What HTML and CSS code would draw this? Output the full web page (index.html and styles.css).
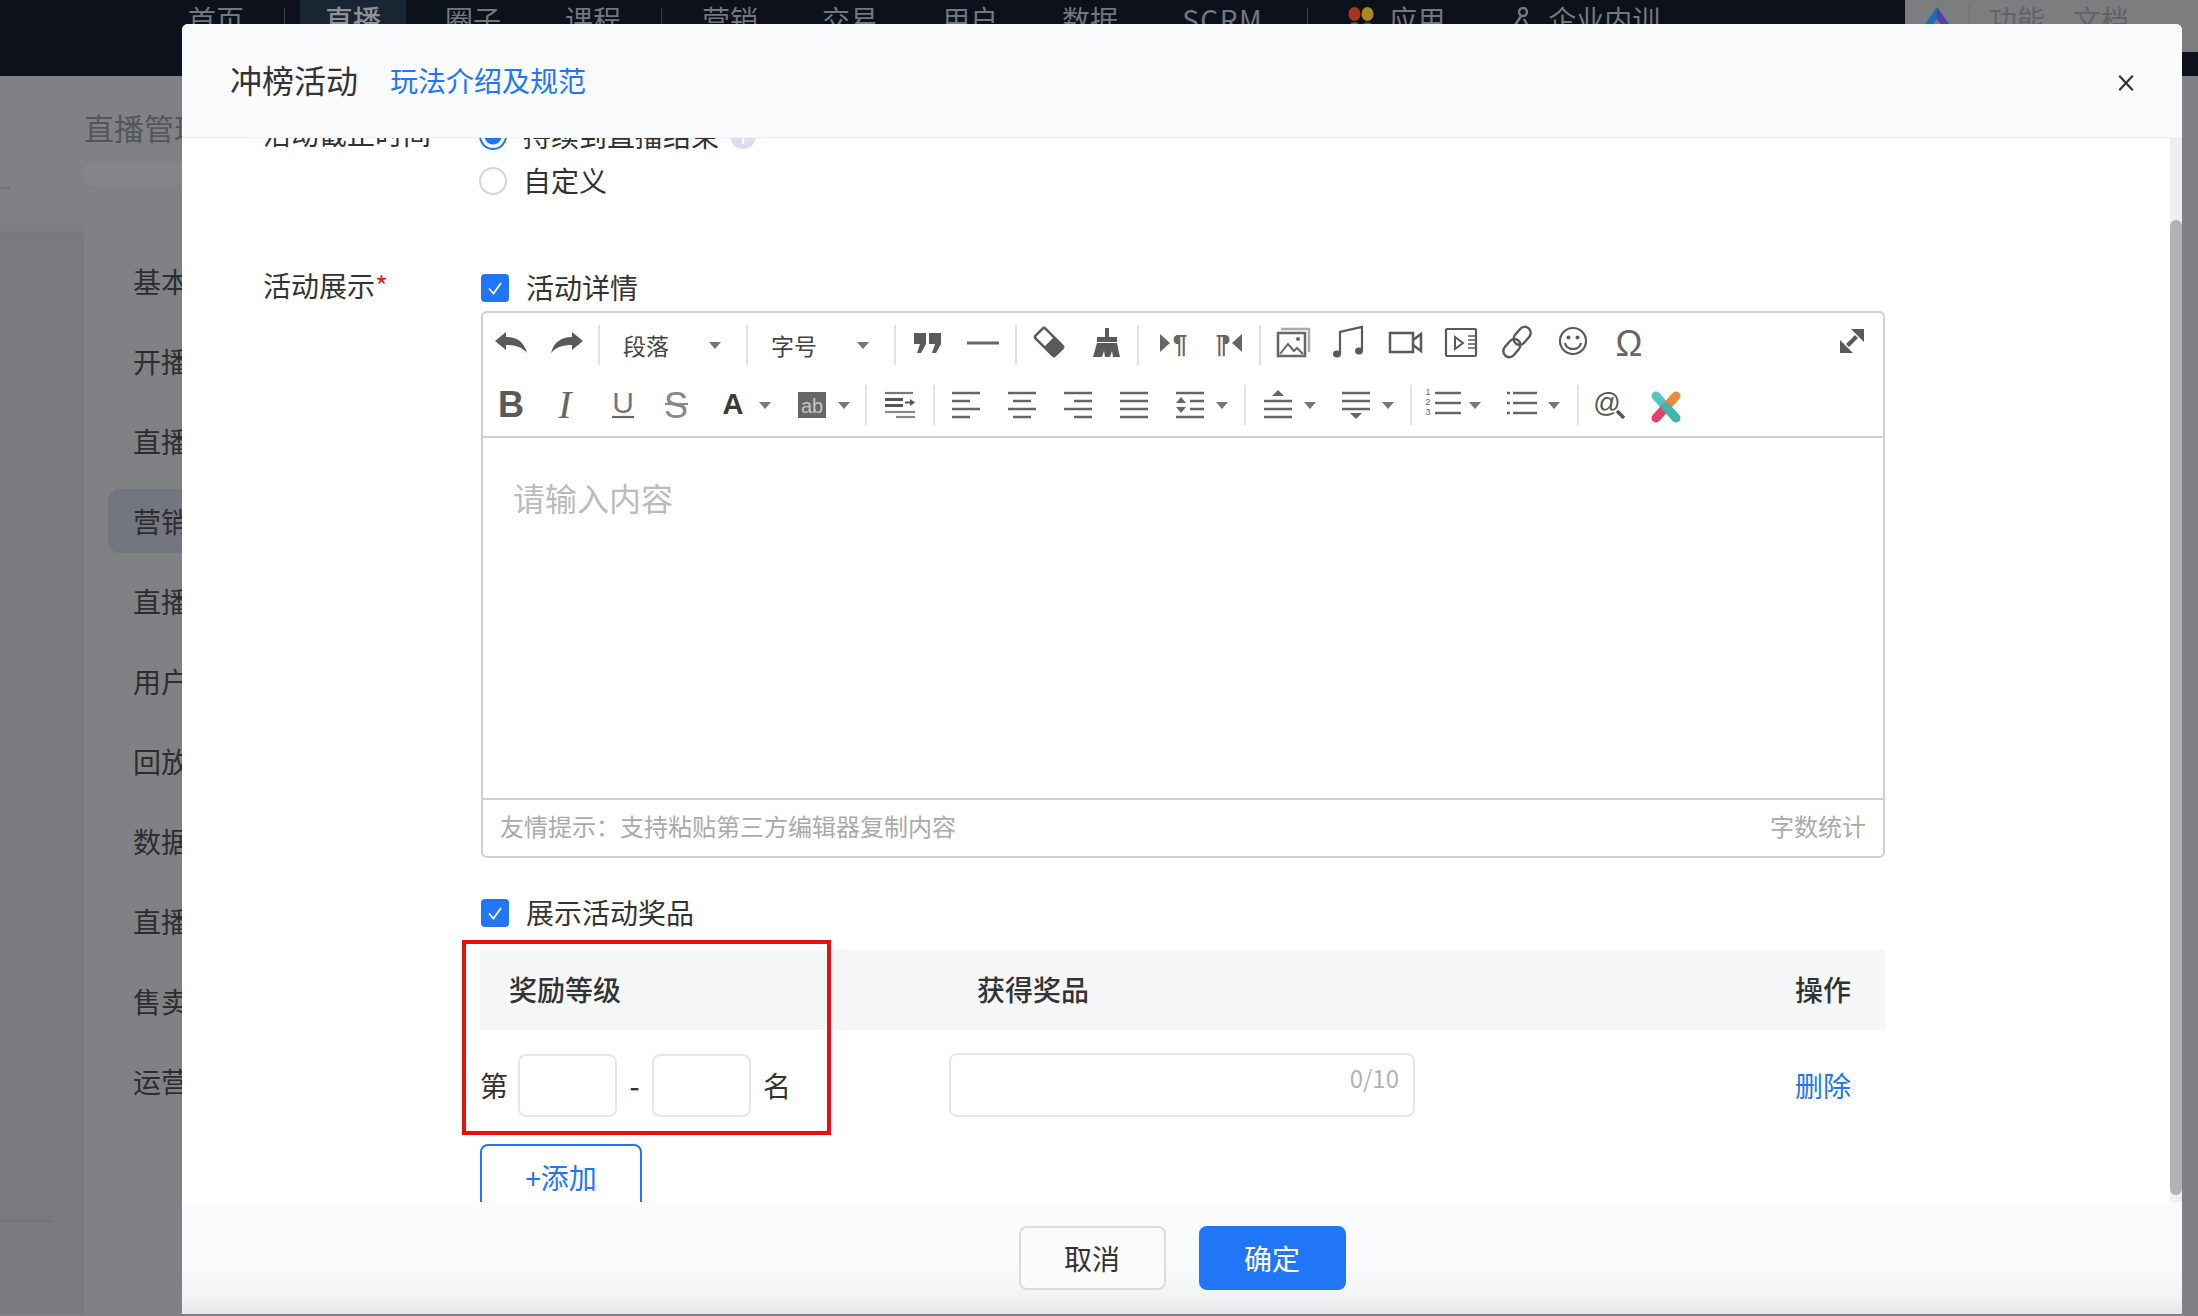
FILE: index.html
```html
<!DOCTYPE html>
<html lang="zh-CN">
<head>
    <meta charset="UTF-8">
    <meta name="viewport" content="width=device-width, initial-scale=1.0">
    <title>冲榜活动</title>
    <link rel="stylesheet" href="styles.css">
</head>
<body>
    <!-- page behind the dialog -->
    <div class="topbar">
        <div class="nav-item">首页</div>
        <div class="nav-sep"></div>
        <div class="nav-item nav-active">直播</div>
        <div class="nav-item">圈子</div>
        <div class="nav-item">课程</div>
        <div class="nav-sep"></div>
        <div class="nav-item">营销</div>
        <div class="nav-item">交易</div>
        <div class="nav-item">用户</div>
        <div class="nav-item">数据</div>
        <div class="nav-item nav-scrm">SCRM</div>
        <div class="nav-sep"></div>
        <div class="nav-item nav-icon-item">
            <svg class="nav-apps" viewBox="0 0 26 34">
                <ellipse cx="6.5" cy="7" rx="6" ry="7" fill="#a8361d"/>
                <ellipse cx="19.5" cy="7" rx="6" ry="7" fill="#a98a1f"/>
                <ellipse cx="6.5" cy="21" rx="6" ry="6" fill="#2c7d3e"/>
                <ellipse cx="19.5" cy="21" rx="6" ry="6" fill="#1e4f9c"/>
            </svg>
            <span>应用</span>
        </div>
        <div class="nav-item nav-icon-item">
            <svg class="nav-train" viewBox="0 0 24 34">
                <circle cx="14" cy="6" r="4" fill="none" stroke="#74777c" stroke-width="2.5"/>
                <path d="M12 10 3 24h18l-6-11M5 24l-3 8h20l-3-8" fill="none" stroke="#74777c" stroke-width="2.5"/>
            </svg>
            <span>企业内训</span>
        </div>
        <div class="nav-right">
            <svg class="nav-logo" viewBox="0 0 48 34">
                <path d="M24 0 0 34h9l15-22z" fill="#1a6fb0"/>
                <path d="M24 0l24 34h-9L24 12z" fill="#5a3ea8"/>
            </svg>
            <div class="nav-right-sep"></div>
            <span class="nav-right-link">功能</span>
            <span class="nav-right-link">文档</span>
        </div>
    </div>

    <div class="page">
        <div class="rail">
            <div class="rail-line rail-line-short"></div>
            <div class="rail-line rail-line-long"></div>
        </div>
        <div class="page-main">
            <div class="crumb">直播管理</div>
            <div class="crumb-panel"></div>
            <div class="side-panel">
                <div class="side-item">基本信息</div>
                <div class="side-item">开播提醒</div>
                <div class="side-item">直播设置</div>
                <div class="side-item side-active">营销工具</div>
                <div class="side-item">直播互动</div>
                <div class="side-item">用户管理</div>
                <div class="side-item">回放设置</div>
                <div class="side-item">数据统计</div>
                <div class="side-item">直播带货</div>
                <div class="side-item">售卖设置</div>
                <div class="side-item">运营工具</div>
            </div>
        </div>
    </div>

    <!-- dialog -->
    <div class="modal">
        <div class="modal-header">
            <div class="modal-title">冲榜活动</div>
            <a class="modal-link">玩法介绍及规范</a>
            <svg class="modal-close" viewBox="0 0 16 16">
                <path d="M2 1.500l12 13M14 1.500 2 14.500" stroke="#333" stroke-width="1.9"/>
            </svg>
        </div>

        <div class="modal-body">
            <div class="form">
                <div class="form-row form-row-first">
                    <div class="form-label">活动截止时间</div>
                    <div class="radio-group">
                        <div class="radio-row">
                            <span class="radio radio-on"></span>
                            <span class="row-text">持续到直播结束</span>
                            <span class="info-dot">i</span>
                        </div>
                        <div class="radio-row">
                            <span class="radio"></span>
                            <span class="row-text">自定义</span>
                        </div>
                    </div>
                </div>

                <div class="form-row form-row-show">
                    <div class="form-label">活动展示<span class="required">*</span></div>
                    <div class="form-content">
                        <div class="check-row">
                            <span class="checkbox">
                                <svg viewBox="0 0 28 28"><path d="M8 14.5l4.5 5L20 9" fill="none" stroke="#fff" stroke-width="1.8"/></svg>
                            </span>
                            <span class="row-text">活动详情</span>
                        </div>

                        <div class="editor">
                            <div class="toolbar">
                                <div class="tb-row">
                                    <span class="tb-btn">
                                        <svg viewBox="0 0 40 40"><path d="M4 16 15 7v5c11 0 18 5 21 16-5-6-12-8-21-8v5z" fill="#5a5a5a"/></svg>
                                    </span>
                                    <span class="tb-btn">
                                        <svg viewBox="0 0 40 40"><path d="M36 16 25 7v5C14 12 7 17 4 28c5-6 12-8 21-8v5z" fill="#5a5a5a"/></svg>
                                    </span>
                                    <span class="tb-sep"></span>
                                    <span class="tb-drop">段落<i class="caret"></i></span>
                                    <span class="tb-sep"></span>
                                    <span class="tb-drop">字号<i class="caret"></i></span>
                                    <span class="tb-sep"></span>
                                    <span class="tb-btn">
                                        <svg viewBox="0 0 40 40"><path d="M7 8h12v11l-5 9h-4l3-9H7zM22 8h12v11l-5 9h-4l3-9h-6z" fill="#5a5a5a"/></svg>
                                    </span>
                                    <span class="tb-btn">
                                        <svg viewBox="0 0 40 40"><path d="M4 18h32" stroke="#666" stroke-width="3"/></svg>
                                    </span>
                                    <span class="tb-sep tb-sep-wide"></span>
                                    <span class="tb-btn">
                                        <svg viewBox="0 0 40 40">
                                            <g transform="rotate(45 20 17)">
                                                <rect x="6" y="10" width="28" height="14" rx="2" fill="#fff" stroke="#5a5a5a" stroke-width="2.5"/>
                                                <rect x="20" y="10" width="14" height="14" fill="#5a5a5a"/>
                                            </g>
                                        </svg>
                                    </span>
                                    <span class="tb-btn">
                                        <svg viewBox="0 0 40 40">
                                            <path d="M20 3h4v9h-4zM12 12h20v5H12zM12 18h20l3 14h-7l-1-6-2 6h-5l-1-6-2 6H8z" fill="#5a5a5a"/>
                                        </svg>
                                    </span>
                                    <span class="tb-sep tb-sep-wide"></span>
                                    <span class="tb-btn">
                                        <svg viewBox="0 0 40 40">
                                            <path d="M9 9l10 9-10 9z" fill="#666"/>
                                            <text class="tb-pilcrow" x="29" y="28" text-anchor="middle">¶</text>
                                        </svg>
                                    </span>
                                    <span class="tb-btn">
                                        <svg viewBox="0 0 40 40">
                                            <path d="M35 9l-10 9 10 9z" fill="#666"/>
                                            <text class="tb-pilcrow" transform="matrix(-1 0 0 1 30 0)" x="14" y="28" text-anchor="middle">¶</text>
                                        </svg>
                                    </span>
                                    <span class="tb-sep tb-sep-wide"></span>
                                    <span class="tb-btn">
                                        <svg viewBox="0 0 40 40">
                                            <path d="M8 4h28v23" fill="none" stroke="#aaa" stroke-width="2.5"/>
                                            <rect x="5" y="8" width="27" height="23" fill="#fff" stroke="#666" stroke-width="2.5"/>
                                            <path d="M7 29l8-10 6 7 3-3 6 6" fill="none" stroke="#666" stroke-width="2"/>
                                            <circle cx="25" cy="14" r="2" fill="#666"/>
                                        </svg>
                                    </span>
                                    <span class="tb-btn">
                                        <svg viewBox="0 0 40 40">
                                            <path d="M11 28V7l22-5v23" fill="none" stroke="#5a5a5a" stroke-width="2.2"/>
                                            <ellipse cx="8" cy="29" rx="4" ry="3.4" fill="#5a5a5a"/>
                                            <ellipse cx="30" cy="26" rx="4" ry="3.4" fill="#5a5a5a"/>
                                        </svg>
                                    </span>
                                    <span class="tb-btn">
                                        <svg viewBox="0 0 40 40">
                                            <rect x="5" y="8" width="23" height="19" fill="none" stroke="#5a5a5a" stroke-width="2.5"/>
                                            <path d="M28 15l8-6v17l-8-6" fill="none" stroke="#5a5a5a" stroke-width="2.5"/>
                                        </svg>
                                    </span>
                                    <span class="tb-btn">
                                        <svg viewBox="0 0 40 40">
                                            <rect x="5" y="4" width="30" height="27" rx="1" fill="none" stroke="#5a5a5a" stroke-width="2.2"/>
                                            <path d="M14 12l8 6-8 6z" fill="none" stroke="#5a5a5a" stroke-width="2"/>
                                            <path d="M27 11h8M27 15h8M27 19h8M27 23h8" stroke="#5a5a5a" stroke-width="1.6"/>
                                        </svg>
                                    </span>
                                    <span class="tb-btn">
                                        <svg viewBox="0 0 40 40">
                                            <g fill="none" stroke="#5a5a5a" stroke-width="2.4" transform="rotate(-50 20 17)">
                                                <rect x="2" y="11" width="20" height="12" rx="6"/>
                                                <rect x="18" y="11" width="20" height="12" rx="6"/>
                                            </g>
                                        </svg>
                                    </span>
                                    <span class="tb-btn">
                                        <svg viewBox="0 0 40 40">
                                            <circle cx="20" cy="16" r="13" fill="none" stroke="#5a5a5a" stroke-width="2.2"/>
                                            <circle cx="15.5" cy="12.5" r="2" fill="#5a5a5a"/>
                                            <circle cx="24.5" cy="12.5" r="2" fill="#5a5a5a"/>
                                            <path d="M12 18c2 8 14 8 16 0" fill="none" stroke="#5a5a5a" stroke-width="2.2"/>
                                        </svg>
                                    </span>
                                    <span class="tb-btn">
                                        <svg viewBox="0 0 40 40"><text class="tb-omega" x="20" y="31" text-anchor="middle">Ω</text></svg>
                                    </span>
                                    <span class="tb-full">
                                        <svg viewBox="0 0 24 24">
                                            <path d="M11 0h13v13zM0 24V11l13 13zM6 15 15 6l3 3-9 9z" fill="#5a5a5a"/>
                                        </svg>
                                    </span>
                                </div>

                                <div class="tb-row">
                                    <span class="tb-btn">
                                        <svg viewBox="0 0 40 40"><text class="tb-b" x="20" y="32" text-anchor="middle">B</text></svg>
                                    </span>
                                    <span class="tb-btn">
                                        <svg viewBox="0 0 40 40"><text class="tb-i" x="18" y="33" text-anchor="middle">I</text></svg>
                                    </span>
                                    <span class="tb-btn">
                                        <svg viewBox="0 0 40 40">
                                            <text class="tb-u" x="20" y="28" text-anchor="middle">U</text>
                                            <path d="M9 32h22" stroke="#666" stroke-width="2.2"/>
                                        </svg>
                                    </span>
                                    <span class="tb-btn">
                                        <svg viewBox="0 0 40 40">
                                            <text class="tb-s" x="17" y="33" text-anchor="middle">S</text>
                                            <path d="M6 19h23" stroke="#888" stroke-width="2.2"/>
                                        </svg>
                                    </span>
                                    <span class="tb-split">
                                        <svg viewBox="0 0 40 40"><text class="tb-a" x="20" y="29" text-anchor="middle">A</text></svg>
                                        <i class="caret caret-sm"></i>
                                    </span>
                                    <span class="tb-split split-ab">
                                        <svg viewBox="0 0 40 40">
                                            <rect x="6" y="7" width="28" height="26" fill="#666"/>
                                            <text class="tb-ab" x="20" y="28" text-anchor="middle">ab</text>
                                        </svg>
                                        <i class="caret caret-sm"></i>
                                    </span>
                                    <span class="tb-sep"></span>
                                    <span class="tb-btn tb-btn-indent">
                                        <svg viewBox="0 0 40 40">
                                            <path d="M5 8h28" stroke="#777" stroke-width="2.2"/>
                                            <path d="M5 14.500h18M5 20.500h18" stroke="#555" stroke-width="3"/>
                                            <path d="M25 17.500h6" stroke="#555" stroke-width="2"/>
                                            <path d="M30 14l5 3.500-5 3.500z" fill="#555"/>
                                            <path d="M5 27h30" stroke="#888" stroke-width="2.2"/>
                                            <path d="M16 32h19" stroke="#888" stroke-width="2.2"/>
                                        </svg>
                                    </span>
                                    <span class="tb-sep"></span>
                                    <span class="tb-btn">
                                        <svg viewBox="0 0 40 40"><path d="M6 8h28M6 16h18M6 24h28M6 32h18" stroke="#666" stroke-width="2.400"/></svg>
                                    </span>
                                    <span class="tb-btn">
                                        <svg viewBox="0 0 40 40"><path d="M6 8h28M11 16h18M6 24h28M11 32h18" stroke="#666" stroke-width="2.400"/></svg>
                                    </span>
                                    <span class="tb-btn">
                                        <svg viewBox="0 0 40 40"><path d="M6 8h28M16 16h18M6 24h28M16 32h18" stroke="#666" stroke-width="2.400"/></svg>
                                    </span>
                                    <span class="tb-btn">
                                        <svg viewBox="0 0 40 40"><path d="M6 8h28M6 16h28M6 24h28M6 32h28" stroke="#666" stroke-width="2.400"/></svg>
                                    </span>
                                    <span class="tb-split split-lh">
                                        <svg viewBox="0 0 40 40">
                                            <path d="M6 8h28M20 16h14M20 24h14M6 32h28" stroke="#666" stroke-width="2.400"/>
                                            <path d="M11 12l5 6H6zM11 28l5-6H6z" fill="#666"/>
                                        </svg>
                                        <i class="caret caret-sm"></i>
                                    </span>
                                    <span class="tb-sep"></span>
                                    <span class="tb-split split-top">
                                        <svg viewBox="0 0 40 40">
                                            <path d="M14 11l6-6 6 6z" fill="#666"/>
                                            <path d="M6 16h28M6 24h28M6 32h28" stroke="#666" stroke-width="2.400"/>
                                        </svg>
                                        <i class="caret caret-sm"></i>
                                    </span>
                                    <span class="tb-split split-bottom">
                                        <svg viewBox="0 0 40 40">
                                            <path d="M6 8h28M6 16h28M6 24h28" stroke="#666" stroke-width="2.400"/>
                                            <path d="M14 28l6 6 6-6z" fill="#666"/>
                                        </svg>
                                        <i class="caret caret-sm"></i>
                                    </span>
                                    <span class="tb-sep"></span>
                                    <span class="tb-split split-ol">
                                        <svg viewBox="0 0 40 40">
                                            <text class="tb-num" x="5" y="10" text-anchor="middle">1</text>
                                            <text class="tb-num" x="5" y="20" text-anchor="middle">2</text>
                                            <text class="tb-num" x="5" y="30" text-anchor="middle">3</text>
                                            <path d="M12 8h26M12 18h26M12 28h26" stroke="#666" stroke-width="2.400"/>
                                        </svg>
                                        <i class="caret caret-sm"></i>
                                    </span>
                                    <span class="tb-split split-ul">
                                        <svg viewBox="0 0 40 40">
                                            <path d="M5 8h3M5 18h3M5 28h3" stroke="#666" stroke-width="2.400"/>
                                            <path d="M11 8h24M11 18h24M11 28h24" stroke="#666" stroke-width="2.400"/>
                                        </svg>
                                        <i class="caret caret-sm"></i>
                                    </span>
                                    <span class="tb-sep"></span>
                                    <span class="tb-btn">
                                        <svg viewBox="0 0 40 40">
                                            <text class="tb-at" x="17" y="27" text-anchor="middle">@</text>
                                            <path d="M27 26l7 7" stroke="#555" stroke-width="3.500"/>
                                        </svg>
                                    </span>
                                    <span class="tb-btn">
                                        <svg viewBox="0 0 40 40">
                                            <g fill="none" stroke-width="9" stroke-linecap="round">
                                                <path d="M10 11l10 11" stroke="#54c6bf"/>
                                                <path d="M30 11 20 22" stroke="#ee8a3c"/>
                                                <path d="M10 33l10-11" stroke="#e6406f"/>
                                                <path d="M30 33 20 22" stroke="#3fb6a6"/>
                                            </g>
                                        </svg>
                                    </span>
                                </div>
                            </div>

                            <div class="editor-area">请输入内容</div>

                            <div class="editor-foot">
                                <span>友情提示：支持粘贴第三方编辑器复制内容</span>
                                <span>字数统计</span>
                            </div>
                        </div>

                        <div class="check-row check-row-prize">
                            <span class="checkbox">
                                <svg viewBox="0 0 28 28"><path d="M8 14.5l4.5 5L20 9" fill="none" stroke="#fff" stroke-width="1.8"/></svg>
                            </span>
                            <span class="row-text">展示活动奖品</span>
                        </div>
                    </div>
                </div>

                <div class="prize-table">
                    <div class="prize-head">
                        <div class="head-level">奖励等级</div>
                        <div class="head-prize">获得奖品</div>
                        <div class="head-action">操作</div>
                    </div>
                    <div class="prize-row">
                        <div class="level-cell">
                            <span>第</span>
                            <span class="rank-input"></span>
                            <span class="rank-dash">-</span>
                            <span class="rank-input"></span>
                            <span class="rank-end">名</span>
                        </div>
                        <div class="prize-input">0/10</div>
                        <a class="row-delete">删除</a>
                    </div>
                    <button class="add-btn">+添加</button>
                </div>
            </div>

            <div class="scrollbar"><div class="scroll-thumb"></div></div>
            <div class="red-box"></div>
        </div>

        <div class="modal-footer">
            <button class="btn btn-cancel">取消</button>
            <button class="btn btn-primary">确定</button>
        </div>
    </div>
</body>
</html>
```

FILE: styles.css
```css
* {
    box-sizing: border-box;
}
html, body {
    margin: 0;
    height: 100%;
}
body {
    width: 2198px;
    height: 1316px;
    overflow: hidden;
    position: relative;
    background-color: #808184;
    font-family: "Noto Sans CJK SC", "Liberation Sans", sans-serif;
    font-size: 28px;
    color: #333;
}

/* top bar, dimmed by the dialog mask */
.topbar {
    display: flex;
    align-items: flex-start;
    gap: 14px;
    height: 76px;
    padding-left: 163px;
    background-color: #0c111b;
    color: #74777c;
}
.nav-item {
    height: 76px;
    padding: 0 25px;
    line-height: 38px;
    white-space: nowrap;
}
.nav-active {
    background-color: #1a2534;
    color: #8e9196;
    font-weight: 500;
}
.nav-scrm {
    padding-right: 29px;
    letter-spacing: 1.5px;
}
.nav-icon-item {
    display: flex;
    gap: 15px;
}
.nav-apps {
    width: 26px;
    height: 34px;
    margin-top: 7px;
}
.nav-train {
    width: 24px;
    height: 34px;
    margin-top: 6px;
}
.nav-sep {
    width: 1px;
    height: 24px;
    margin: 8px 1px 0;
    background-color: #3a3e45;
}
.nav-right {
    display: flex;
    align-items: flex-start;
    width: 293px;
    height: 52px;
    margin-left: auto;
    padding-left: 8px;
    background-color: #7c7d7f;
    color: #626366;
    line-height: 38px;
}
.nav-logo {
    width: 48px;
    height: 34px;
    margin-top: 7px;
}
.nav-right-sep {
    width: 1px;
    height: 40px;
    margin: 4px 19px 0 8px;
    background-color: #6f7072;
}
.nav-right-link {
    margin-right: 28px;
}

/* page under the mask */
.page {
    display: flex;
    height: 1238px;
}
.rail {
    width: 84px;
    background: linear-gradient(#808184 0, #808184 142px, #797a7d 160px);
}
.rail-line {
    height: 2px;
    background-color: #717275;
}
.rail-line-short {
    width: 10px;
    margin-top: 111px;
}
.rail-line-long {
    width: 52px;
    margin-top: 1031px;
}
.page-main {
    flex: 1;
}
.crumb {
    height: 87px;
    padding-top: 30px;
    font-size: 30px;
    line-height: 42px;
    color: #55565a;
}
.crumb-panel {
    width: 400px;
    height: 22px;
    border-radius: 8px 0 0 8px;
    background-color: #858689;
}
.side-panel {
    display: flex;
    flex-direction: column;
    gap: 16px;
    width: 400px;
    height: 1065px;
    margin-top: 33px;
    padding: 31px 0 0 24px;
    background-color: #808184;
}
.side-item {
    height: 64px;
    padding-left: 25px;
    border-radius: 12px 0 0 12px;
    line-height: 64px;
    color: #2d2d2e;
    white-space: nowrap;
}
.side-active {
    background-color: #73767f;
}

/* dialog */
.modal {
    position: absolute;
    left: 182px;
    top: 24px;
    display: flex;
    flex-direction: column;
    width: 2000px;
    height: 1290px;
    border-radius: 6px 6px 0 0;
    overflow: hidden;
    background-color: #fff;
}
.modal-header {
    display: flex;
    align-items: center;
    flex-shrink: 0;
    height: 114px;
    padding: 0 47px 1px 48px;
    border-bottom: 1px solid #f0f0f1;
    background-color: #fafbfd;
}
.modal-title {
    margin-bottom: 3px;
    font-size: 32px;
    color: #333;
}
.modal-link {
    margin-left: 32px;
    font-size: 28px;
    color: #2176f7;
}
.modal-close {
    width: 18px;
    height: 18px;
    margin-top: 5px;
    margin-left: auto;
}
.modal-body {
    position: relative;
    display: flex;
    flex: 1;
    overflow: hidden;
}
.form {
    flex: 1;
    padding-left: 81px;
}
.form-row {
    display: flex;
}
.form-row-first {
    margin-top: -23px;
}
.form-row-show {
    margin-top: 65px;
}
.form-label {
    width: 218px;
    flex-shrink: 0;
    line-height: 37px;
    white-space: nowrap;
}
.required {
    color: #e5212b;
}
.radio-group {
    display: flex;
    flex-direction: column;
    gap: 3px;
    margin-left: -2px;
}
.radio-row {
    display: flex;
    align-items: center;
    gap: 16px;
    height: 42px;
}
.row-text {
    margin-bottom: 3px;
}
.radio {
    width: 28px;
    height: 28px;
    border: 2px solid #d5d5d8;
    border-radius: 50%;
    background-color: #fff;
}
.radio-on {
    border-color: #2176f7;
    background: radial-gradient(circle, #2176f7 0, #2176f7 8px, #fff 9px);
}
.info-dot {
    width: 26px;
    height: 26px;
    margin-left: -5px;
    border-radius: 50%;
    background-color: #d9dfee;
    color: #fff;
    font-size: 18px;
    line-height: 26px;
    text-align: center;
}
.form-content {
    width: 1404px;
}
.check-row {
    display: flex;
    align-items: center;
    gap: 17px;
    height: 42px;
}
.check-row-prize {
    margin-top: 34px;
}
.checkbox {
    width: 28px;
    height: 28px;
    border-radius: 4px;
    background-color: #2176f7;
}
.checkbox svg {
    display: block;
    width: 28px;
    height: 28px;
}

/* rich text editor */
.editor {
    height: 547px;
    margin-top: 2px;
    border: 2px solid #cfcfcf;
    border-radius: 6px;
    display: flex;
    flex-direction: column;
}
.toolbar {
    height: 125px;
    border-bottom: 2px solid #cfcfcf;
}
.tb-row {
    display: flex;
    align-items: center;
    height: 60px;
    padding-top: 4px;
}
.tb-btn {
    display: flex;
    justify-content: center;
    width: 56px;
    flex-shrink: 0;
}
.tb-btn svg,
.tb-split svg {
    display: block;
    width: 40px;
    height: 40px;
    flex-shrink: 0;
}
.tb-btn-indent {
    width: 60px;
}
.tb-sep {
    width: 8px;
    height: 40px;
    flex-shrink: 0;
    background: linear-gradient(#e2e2e2, #e2e2e2) center / 2px 100% no-repeat;
}
.tb-sep-wide {
    width: 10px;
}
.tb-drop {
    display: flex;
    align-items: center;
    justify-content: space-between;
    width: 140px;
    flex-shrink: 0;
    padding: 0 22px 0 20px;
    font-size: 23px;
    color: #444;
}
.caret {
    width: 0;
    height: 0;
    border-left: 6px solid transparent;
    border-right: 6px solid transparent;
    border-top: 7px solid #777;
}
.caret-sm {
    flex-shrink: 0;
}
.tb-split {
    display: flex;
    align-items: center;
    gap: 6px;
    flex-shrink: 0;
    padding: 0 8px 0 6px;
}
.split-ab {
    padding: 0 12px 0 13px;
}
.split-lh {
    padding: 0 13px 0 8px;
}
.split-top {
    padding: 0 3px 0 9px;
}
.split-bottom {
    padding: 0 13px 0 17px;
}
.split-ol {
    padding: 0 10px 0 8px;
}
.split-ul {
    padding: 0 14px 0 11px;
}
.tb-full {
    display: block;
    width: 24px;
    height: 24px;
    margin: -8px 19px 0 auto;
}
.tb-full svg {
    display: block;
}
.tb-pilcrow {
    font-family: "Liberation Sans", sans-serif;
    font-size: 26px;
    font-weight: bold;
    fill: #666;
}
.tb-omega {
    font-family: "Liberation Sans", sans-serif;
    font-size: 36px;
    fill: #666;
}
.tb-b {
    font-family: "Liberation Sans", sans-serif;
    font-size: 36px;
    font-weight: bold;
    fill: #5a5a5a;
}
.tb-i {
    font-family: "Liberation Serif", serif;
    font-size: 40px;
    font-style: italic;
    fill: #666;
}
.tb-u {
    font-family: "Liberation Sans", sans-serif;
    font-size: 30px;
    fill: #777;
}
.tb-s {
    font-family: "Liberation Sans", sans-serif;
    font-size: 36px;
    fill: #888;
}
.tb-a {
    font-family: "Liberation Sans", sans-serif;
    font-size: 29px;
    font-weight: bold;
    fill: #3a3a3a;
}
.tb-ab {
    font-family: "Liberation Sans", sans-serif;
    font-size: 20px;
    fill: #c4c4c4;
}
.tb-num {
    font-family: "Liberation Sans", sans-serif;
    font-size: 9px;
    fill: #666;
}
.tb-at {
    font-family: "Liberation Sans", sans-serif;
    font-size: 27px;
    fill: #555;
}
.editor-area {
    flex: 1;
    padding: 35px 30px;
    font-size: 32px;
    line-height: 48px;
    color: #bbb;
}
.editor-foot {
    display: flex;
    justify-content: space-between;
    align-items: center;
    height: 58px;
    padding: 0 17px 5px;
    border-top: 2px solid #cfcfcf;
    font-size: 24px;
    color: #aaa;
}

/* prize table */
.prize-table {
    width: 1405px;
    margin-top: 16px;
    margin-left: 217px;
}
.prize-head,
.prize-row {
    display: grid;
    grid-template-columns: 469px 466px 470px;
}
.prize-head {
    height: 80px;
    align-items: center;
    padding-bottom: 2px;
    background-color: #f5f6f8;
    font-weight: 500;
}
.head-level {
    padding-left: 29px;
}
.head-prize {
    padding-left: 28px;
}
.head-action {
    padding-right: 34px;
    text-align: right;
}
.prize-row {
    align-items: center;
    height: 63px;
    margin-top: 23px;
}
.level-cell {
    display: flex;
    align-items: center;
}
.rank-input {
    width: 99px;
    height: 63px;
    margin-left: 10px;
    border: 2px solid #e6e6e6;
    border-radius: 8px;
}
.rank-dash {
    width: 35px;
    margin-right: -10px;
    text-align: center;
    font-weight: 500;
}
.rank-end {
    margin-left: 12px;
}
.prize-input {
    display: flex;
    justify-content: flex-end;
    height: 64px;
    padding: 6px 14px 0 0;
    border: 2px solid #e6e6e6;
    border-radius: 8px;
    font-size: 24px;
    line-height: 34px;
    color: #b3b3b3;
}
.row-delete {
    padding-right: 34px;
    text-align: right;
    color: #2176f7;
}
.add-btn {
    display: block;
    width: 162px;
    height: 72px;
    margin-top: 28px;
    padding-bottom: 7px;
    border: 2px solid #2176f7;
    border-radius: 8px;
    background-color: #fff;
    font: inherit;
    color: #2176f7;
}
.scrollbar {
    width: 12px;
    flex-shrink: 0;
    background-color: #efefef;
}
.scroll-thumb {
    height: 975px;
    margin-top: 82px;
    border-radius: 6px;
    background-color: #b2b2b2;
}
.red-box {
    position: absolute;
    left: 280px;
    top: 802px;
    width: 369px;
    height: 195px;
    border: 4px solid #ea0f0f;
}

/* dialog footer */
.modal-footer {
    display: flex;
    justify-content: center;
    align-items: flex-start;
    gap: 33px;
    flex-shrink: 0;
    height: 112px;
    padding-top: 24px;
    background: linear-gradient(#fafbfd 0, #fafbfd 55%, #f2f3f5 85%, #e7e8ea 100%);
}
.btn {
    width: 147px;
    height: 64px;
    border-radius: 8px;
    font: inherit;
}
.btn-cancel {
    border: 2px solid #dcdcdc;
    background-color: #fbfbfb;
    color: #333;
}
.btn-primary {
    border: none;
    background-color: #2176f7;
    color: #fff;
}
```
